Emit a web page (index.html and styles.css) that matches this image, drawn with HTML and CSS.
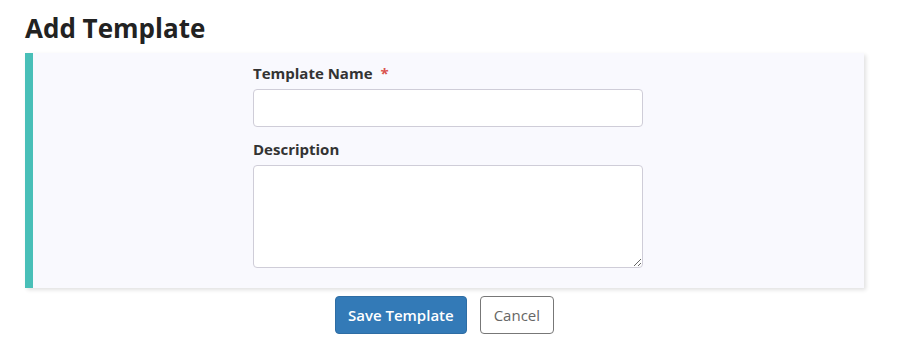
FILE: index.html
```html
<!DOCTYPE html>
<html lang="en">

<head>
    <meta charset="UTF-8">
    <meta name="viewport" content="width=device-width, initial-scale=1.0">
    <title>Add Template</title>
    <link rel="stylesheet" href="styles.css">
</head>

<body>
    <div class="page">
        <h1 class="page__title">Add Template</h1>
        <div class="panel">
            <div class="form">
                <label class="form__label">Template Name <span class="req">*</span></label>
                <input type="text" class="form__input">
                <label class="form__label">Description</label>
                <textarea class="form__textarea"></textarea>
            </div>
        </div>
        <div class="actions">
            <button class="btn btn--primary">Save Template</button>
            <button class="btn btn--default">Cancel</button>
        </div>
    </div>
</body>

</html>
```

FILE: styles.css
```css
body {
    margin: 0;
    font-family: "Open Sans", "Liberation Sans", sans-serif;
    color: #222;
    background: #fff;
}

.page {
    width: 839px;
    padding-left: 25px;
}

.page__title {
    margin: 0;
    padding-top: 10px;
    height: 53px;
    box-sizing: border-box;
    font-size: 26px;
    font-weight: 700;
    line-height: 36px;
    color: #222;
}

.panel {
    display: flex;
    justify-content: center;
    background: #f9f9fe;
    border-left: 8px solid #49bfb8;
    box-shadow: 2px 2px 4px rgba(0, 0, 0, 0.12);
    padding: 10px 1px 20px 0;
}

.form {
    width: 390px;
    display: flex;
    flex-direction: column;
}

.form__label {
    font-size: 15px;
    font-weight: 700;
    line-height: 20px;
    color: #333;
    margin-bottom: 6px;
}

.req {
    color: #d9534f;
    margin-left: 4px;
}

.form__input {
    height: 38px;
    box-sizing: border-box;
    border: 1px solid #cfcdd8;
    border-radius: 4px;
    background: #fff;
    margin-bottom: 12px;
}

.form__textarea {
    height: 103px;
    box-sizing: border-box;
    border: 1px solid #cfcdd8;
    border-radius: 4px;
    background: #fff;
    resize: vertical;
}

.actions {
    display: flex;
    justify-content: center;
    gap: 13px;
    padding-top: 8px;
}

.btn {
    height: 38px;
    font-family: inherit;
    font-size: 15px;
    border-radius: 4px;
    cursor: pointer;
}

.btn--primary {
    padding: 0 12px;
    background: #337ab7;
    border: 1px solid #2e6da4;
    color: #fff;
    font-weight: 600;
}

.btn--default {
    padding: 0 13px;
    background: #fff;
    border: 1px solid #777;
    color: #666;
}
```
